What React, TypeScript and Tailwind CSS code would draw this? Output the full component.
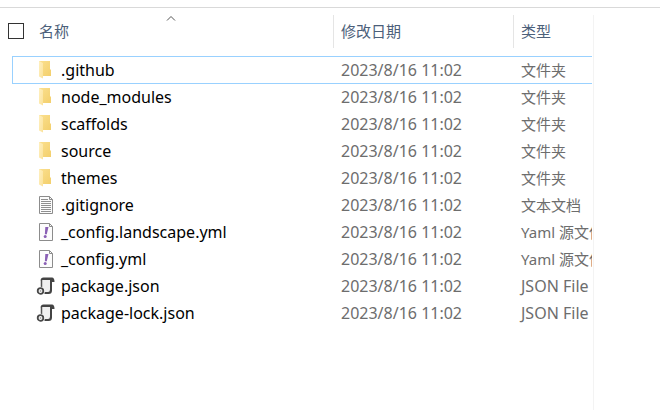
import React from 'react';

type Kind = 'folder' | 'text' | 'yaml' | 'json';

type Entry = {
  name: string;
  kind: Kind;
  selected?: boolean;
};

const MODIFIED = '2023/8/16 11:02';

const typeLabels: Record<Kind, React.ReactNode> = {
  folder: <span className="text-[15px]">文件夹</span>,
  text: <span className="text-[15px]">文本文档</span>,
  yaml: <span className="text-[15px]">Yaml 源文件</span>,
  json: <span>JSON File</span>,
};

const entries: Entry[] = [
  { name: '.github', kind: 'folder', selected: true },
  { name: 'node_modules', kind: 'folder' },
  { name: 'scaffolds', kind: 'folder' },
  { name: 'source', kind: 'folder' },
  { name: 'themes', kind: 'folder' },
  { name: '.gitignore', kind: 'text' },
  { name: '_config.landscape.yml', kind: 'yaml' },
  { name: '_config.yml', kind: 'yaml' },
  { name: 'package.json', kind: 'json' },
  { name: 'package-lock.json', kind: 'json' },
];

function FolderIcon() {
  return (
    <svg viewBox="0 0 20 20" className="size-5 shrink-0" aria-hidden="true">
      <defs>
        <linearGradient id="flap" x1="0" y1="0" x2="1" y2="1">
          <stop offset="0" stopColor="#fff0c0" />
          <stop offset="1" stopColor="#fbe29a" />
        </linearGradient>
        <linearGradient id="back" x1="0" y1="0" x2="1" y2="1">
          <stop offset="0" stopColor="#fbe08f" />
          <stop offset="1" stopColor="#f3cf6c" />
        </linearGradient>
      </defs>
      <path d="M3 1h11v8l1 1v6H3z" fill="url(#back)" />
      <path d="M3 1l4 2v15.500l-4-2z" fill="url(#flap)" />
    </svg>
  );
}

function PageOutline() {
  return (
    <>
      <path d="M3.500 1.500h10l3 3v14h-13z" fill="#fcfcfc" stroke="#8c8c8c" />
      <path d="M13.500 1.500v3h3" fill="none" stroke="#8c8c8c" />
    </>
  );
}

function TextIcon() {
  return (
    <svg viewBox="0 0 20 20" className="size-5 shrink-0" aria-hidden="true">
      <PageOutline />
      <path d="M5 4.500h7M5 6.500h10M5 8.500h10M5 10.500h10M5 12.500h10M5 14.500h10M5 16.500h10" stroke="#8f8f8f" />
    </svg>
  );
}

function YamlIcon() {
  return (
    <svg viewBox="0 0 20 20" className="size-5 shrink-0" aria-hidden="true">
      <PageOutline />
      <path d="M9.300 5h3.200l-1.700 7.300H8.900z" fill="#8a60b5" />
      <circle cx="9.200" cy="14.600" r="1.500" fill="#8a60b5" />
    </svg>
  );
}

function JsonIcon() {
  return (
    <svg viewBox="0 0 20 20" className="size-5 shrink-0" aria-hidden="true">
      <path d="M6 12V3h9v11q0 3-2 3H8z" fill="#f0f0f0" />
      <path d="M5.500 11V3.500" fill="none" stroke="#555" strokeWidth="1.500" />
      <path d="M4.700 4.500Q4.700 1.500 7.500 1.500H16q2.500 0 2.500 4.500H16v8.500q0 3.500-3.500 3.500H8.500v-2H12q2 0 2-2.500V4H6.300z" fill="#444" />
      <circle cx="4.500" cy="15" r="4.200" fill="#fff" />
      <circle cx="4.500" cy="15" r="2.800" fill="#fff" stroke="#484848" strokeWidth="1.800" />
      <circle cx="4.500" cy="15" r="1" fill="#aaa" />
    </svg>
  );
}

const icons: Record<Kind, () => React.JSX.Element> = {
  folder: FolderIcon,
  text: TextIcon,
  yaml: YamlIcon,
  json: JsonIcon,
};

function FileRow({ entry }: { entry: Entry }) {
  const Icon = icons[entry.kind];
  // the lower edge of a selected row overlaps the row below
  const edge = entry.selected ? '-mb-px h-7 border-y border-[#99d1ff]' : 'h-[27px]';

  return (
    <tr>
      <td className="p-0">
        <div
          className={[
            'ml-1 flex items-center gap-[5px] border-l pl-[23px] text-black',
            edge,
            entry.selected ? '' : 'border-transparent',
          ].join(' ')}
        >
          <Icon />
          <span>{entry.name}</span>
        </div>
      </td>
      <td className="p-0">
        <div className={['flex items-center pl-[7px] text-[#6d6d6d]', edge].join(' ')}>{MODIFIED}</div>
      </td>
      <td className="p-0">
        <div className={['flex items-center overflow-hidden whitespace-nowrap pl-[7px] text-[#6d6d6d]', edge].join(' ')}>
          {typeLabels[entry.kind]}
        </div>
      </td>
    </tr>
  );
}

export default function App() {
  return (
    <div className="flex min-h-screen flex-col bg-white font-['Noto_Sans','Noto_Sans_CJK_SC',sans-serif] text-base leading-5">
      <div className="h-2 border-b border-[#d9d9d9]" />
      <main className="flex flex-1 pt-[7px] pb-0.5">
        <section className="min-w-0 flex-1 border-r border-[#f3f3f3] pr-px pl-2">
          <table className="w-full table-fixed border-collapse">
            <colgroup>
              <col className="w-[326px]" />
              <col className="w-[180px]" />
              <col />
            </colgroup>
            <thead className="text-left text-[15px] text-[#4c607a]">
              <tr>
                <th className="p-0 pb-2 font-normal">
                  <div className="relative flex h-[33px] items-center gap-[15px] border-r border-[#e5e5e5] pb-0.5">
                    <input
                      type="checkbox"
                      aria-label="全选"
                      className="size-4 appearance-none border border-[#333] bg-white"
                    />
                    <button type="button">名称</button>
                    <svg viewBox="0 0 10 6" className="absolute top-0 left-1/2 h-1.5 w-2.5 -translate-x-1/2" aria-hidden="true">
                      <path d="M1 5.500l4-4 4 4" fill="none" stroke="#555" />
                    </svg>
                  </div>
                </th>
                <th className="p-0 pb-2 font-normal">
                  <div className="flex h-[33px] items-center border-r border-[#e5e5e5] pb-0.5 pl-[7px]">
                    <button type="button">修改日期</button>
                  </div>
                </th>
                <th className="p-0 pb-2 font-normal">
                  <div className="flex h-[33px] items-center pb-0.5 pl-[7px]">
                    <button type="button">类型</button>
                  </div>
                </th>
              </tr>
            </thead>
            <tbody>
              {entries.map((entry) => (
                <FileRow key={entry.name} entry={entry} />
              ))}
            </tbody>
          </table>
        </section>
        <aside className="w-[66px] shrink-0" />
      </main>
    </div>
  );
}
